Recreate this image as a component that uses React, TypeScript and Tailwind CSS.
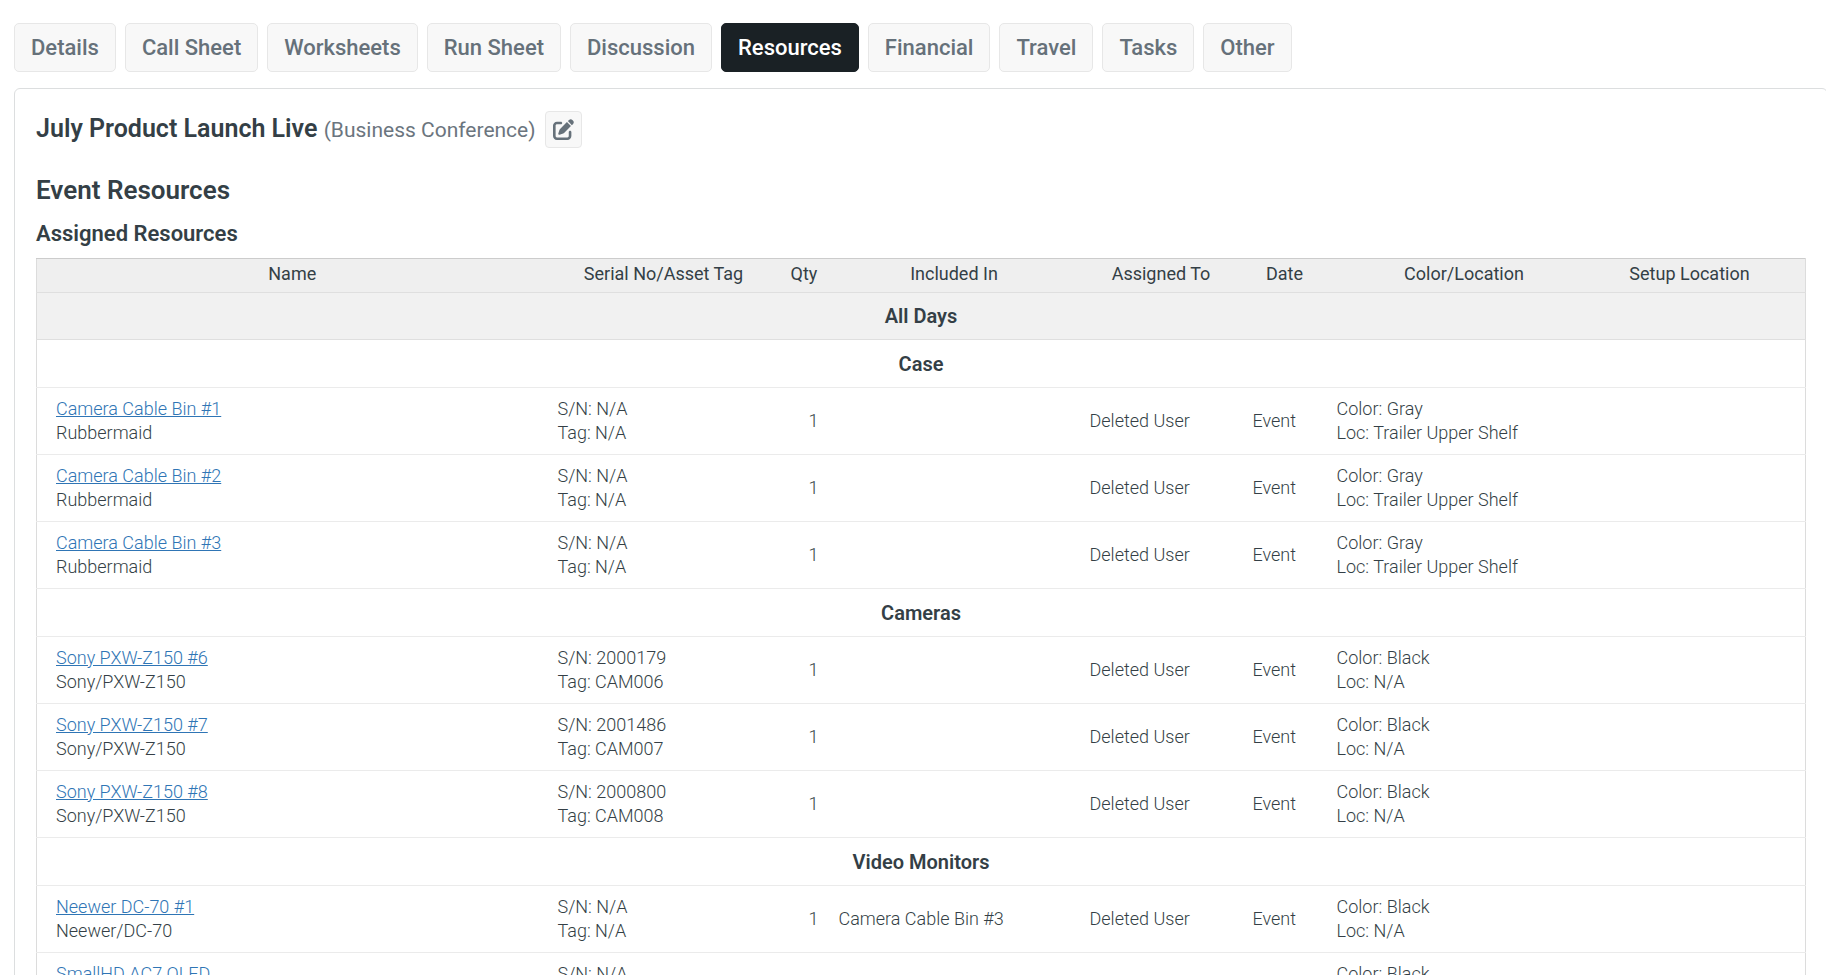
import React from "react";
import { FaPenToSquare } from "react-icons/fa6";
import clsx from "clsx";

interface Resource {
  name: string;
  model: string;
  serial: string;
  tag: string;
  qty: number;
  includedIn?: string;
  color: string;
  location: string;
}

interface ResourceGroup {
  title: string;
  items: Resource[];
}

const tabs = [
  "Details",
  "Call Sheet",
  "Worksheets",
  "Run Sheet",
  "Discussion",
  "Resources",
  "Financial",
  "Travel",
  "Tasks",
  "Other",
];

const groups: ResourceGroup[] = [
  {
    title: "Case",
    items: [
      { name: "Camera Cable Bin #1", model: "Rubbermaid", serial: "N/A", tag: "N/A", qty: 1, color: "Gray", location: "Trailer Upper Shelf" },
      { name: "Camera Cable Bin #2", model: "Rubbermaid", serial: "N/A", tag: "N/A", qty: 1, color: "Gray", location: "Trailer Upper Shelf" },
      { name: "Camera Cable Bin #3", model: "Rubbermaid", serial: "N/A", tag: "N/A", qty: 1, color: "Gray", location: "Trailer Upper Shelf" },
    ],
  },
  {
    title: "Cameras",
    items: [
      { name: "Sony PXW-Z150 #6", model: "Sony/PXW-Z150", serial: "2000179", tag: "CAM006", qty: 1, color: "Black", location: "N/A" },
      { name: "Sony PXW-Z150 #7", model: "Sony/PXW-Z150", serial: "2001486", tag: "CAM007", qty: 1, color: "Black", location: "N/A" },
      { name: "Sony PXW-Z150 #8", model: "Sony/PXW-Z150", serial: "2000800", tag: "CAM008", qty: 1, color: "Black", location: "N/A" },
    ],
  },
  {
    title: "Video Monitors",
    items: [
      { name: "Neewer DC-70 #1", model: "Neewer/DC-70", serial: "N/A", tag: "N/A", qty: 1, includedIn: "Camera Cable Bin #3", color: "Black", location: "N/A" },
      { name: "SmallHD AC7 OLED", model: "SmallHD/AC7", serial: "N/A", tag: "N/A", qty: 1, color: "Black", location: "N/A" },
    ],
  },
];

const Tabs: React.FC = () => (
  <nav className="flex flex-wrap gap-[9px] pl-[14px]">
    {tabs.map((tab) => (
      <a
        key={tab}
        href="#"
        aria-current={tab === "Resources" ? "page" : undefined}
        className={clsx(
          "rounded-[5px] border px-4 py-[9px] text-[22px] leading-[29px] font-medium",
          tab === "Resources"
            ? "border-[#1a2125] bg-[#1a2125] text-white"
            : "border-[#e7e7e7] bg-[#f8f8f8] text-[#66717a]"
        )}
      >
        {tab}
      </a>
    ))}
  </nav>
);

const ResourceRow: React.FC<{ item: Resource }> = ({ item }) => (
  <tr className="border-t border-[#ebebeb] *:py-[9px]">
    <td className="pr-[10px] pl-[19px]">
      <a href="#" className="text-[#2f75b5] underline">
        {item.name}
      </a>
      <br />
      {item.model}
    </td>
    <td className="px-[10px]">
      S/N: {item.serial}
      <br />
      Tag: {item.tag}
    </td>
    <td className="px-[10px] text-right">{item.qty}</td>
    <td className="px-[10px]">{item.includedIn}</td>
    <td className="px-[10px]">Deleted User</td>
    <td className="px-[10px]">Event</td>
    <td className="px-[10px]">
      Color: {item.color}
      <br />
      Loc: {item.location}
    </td>
    <td />
    <td />
  </tr>
);

const App: React.FC = () => {
  return (
    <div className="overflow-hidden bg-white pt-[23px] font-['Roboto',sans-serif] text-[#343f46]">
      <Tabs />

      {/* The panel runs just past the right edge of the page */}
      <main className="mt-4 mr-[-2px] ml-[14px] rounded-[6px] border border-[#dcdedf] px-[21px] pt-[22px] pb-5">
        <div className="mb-[26px] flex items-center gap-[9px]">
          <h1 className="text-[25px] leading-[32px] font-semibold">
            July Product Launch Live{" "}
            <span className="text-[21px] font-normal text-[#6b757e]">
              (Business Conference)
            </span>
          </h1>
          <button
            type="button"
            aria-label="Edit event"
            className="flex size-[37px] items-center justify-center rounded-[4px] border border-[#e7e7e7] bg-[#f8f8f8] text-[#66717a]"
          >
            <FaPenToSquare className="size-[21px]" />
          </button>
        </div>

        <h2 className="mb-[14px] text-[26px] leading-[32px] font-semibold">
          Event Resources
        </h2>
        <h3 className="mb-[10px] text-[22px] leading-[28px] font-semibold">
          Assigned Resources
        </h3>

        <table className="w-full table-fixed border-collapse border border-[#dcdcdc] border-t-[#cccccc] text-[18px] leading-[24px] font-light">
          <colgroup>
            <col />
            <col className="w-[232px]" />
            <col className="w-[49px]" />
            <col className="w-[251px]" />
            <col className="w-[163px]" />
            <col className="w-[84px]" />
            <col className="w-[275px]" />
            <col className="w-[176px]" />
            <col className="w-[28px]" />
          </colgroup>
          <thead>
            <tr className="h-[34px] bg-[#efefef] *:pb-[6px] *:pt-[3px] *:font-normal">
              <th>Name</th>
              <th>Serial No/Asset Tag</th>
              <th>Qty</th>
              <th>Included In</th>
              <th>Assigned To</th>
              <th>Date</th>
              <th>Color/Location</th>
              <th>Setup Location</th>
              <td />
            </tr>
          </thead>
          <tbody>
            <tr className="h-[47px] border-y border-[#dfdfdf] bg-[#f1f1f1]">
              <th colSpan={9} className="text-[20px] font-semibold">
                All Days
              </th>
            </tr>
            {groups.map((group) => (
              <React.Fragment key={group.title}>
                <tr className="h-[48px] border-t border-[#ebebeb]">
                  <th colSpan={9} className="text-[20px] font-semibold">
                    {group.title}
                  </th>
                </tr>
                {group.items.map((item) => (
                  <ResourceRow key={item.name} item={item} />
                ))}
              </React.Fragment>
            ))}
          </tbody>
        </table>
      </main>
    </div>
  );
};

export default App;
